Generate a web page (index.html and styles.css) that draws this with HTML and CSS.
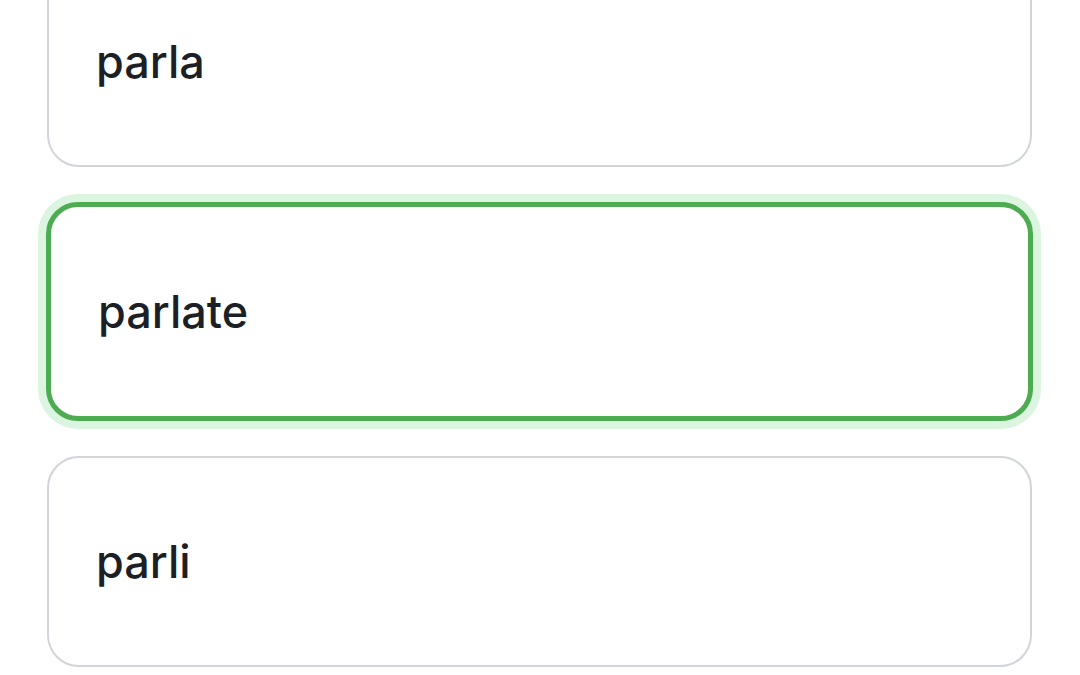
FILE: index.html
```html
<!DOCTYPE html>
<html lang="it">

<head>
    <meta charset="UTF-8">
    <meta name="viewport" content="width=device-width, initial-scale=1.0">
    <title>Scegli la risposta</title>
    <link rel="stylesheet" href="styles.css">
</head>

<body>
    <div class="options">
        <div class="option">
            <span class="option-text">parla</span>
        </div>
        <div class="option option-selected">
            <span class="option-text">parlate</span>
        </div>
        <div class="option">
            <span class="option-text">parli</span>
        </div>
    </div>
</body>

</html>
```

FILE: styles.css
```css
body {
    margin: 0;
    padding: 0;
    background-color: white;
    font-family: "Inter", "Noto Sans", sans-serif;
    color: #1c1f26;
    overflow: hidden;
}

.options {
    display: flex;
    flex-direction: column;
    gap: 35px;
    margin-top: -44px;
    padding: 0 48px 0 47px;
}

.option {
    height: 211px;
    box-sizing: border-box;
    border: 2px solid #d1d4d8;
    border-radius: 32px;
    background-color: white;
    display: flex;
    align-items: center;
    padding-left: 47px;
}

.option-text {
    font-size: 45px;
    font-weight: 500;
    letter-spacing: 0;
}

.option-selected {
    height: 219px;
    margin: 0 -1px;
    border: 5px solid #4dab51;
    padding-left: 47px;
    box-shadow: 0 0 0 8px #dcf5e0;
}
```
